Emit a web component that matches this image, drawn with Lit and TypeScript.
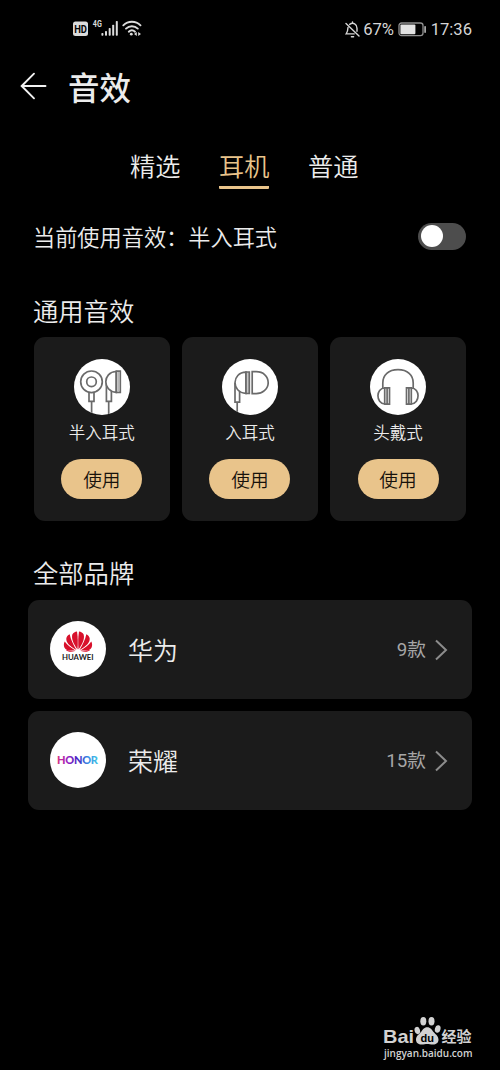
import { LitElement, html, svg, css } from "lit";
import { customElement, property, state } from "lit/decorators.js";

const fonts = css`"Noto Sans CJK SC", "Noto Sans", sans-serif`;

@customElement("status-bar")
class StatusBar extends LitElement {
  static styles = css`
    :host { display: flex; height: 58px; padding: 0 28px 0 73px; align-items: center; justify-content: space-between; box-sizing: border-box; color: #d6d6d6; font: 16.6px/22px Roboto, sans-serif; }
    svg { display: block; }
    .right { display: flex; align-items: center; height: 22px; padding-top: 1px; }
    .net { font: 700 9px Roboto, sans-serif; }
    .hd { font: 700 10.5px Roboto, sans-serif; }
    .battery { margin: 0 4px 0 4px; }
    .bell { margin: 0 3px 0 0; }
    .pct { letter-spacing: -0.15px; }
  `;
  render() {
    return html`
      <svg width="70" height="20" viewBox="0 0 70 20" fill="#dcdcdc">
        <rect x="0" y="2.500" width="15" height="14.500" rx="2.500" />
        <text class="hd" x="1.2" y="13.600" fill="#050505" textLength="12.8" lengthAdjust="spacingAndGlyphs">HD</text>
        <text class="net" x="19.8" y="8.4" textLength="9" lengthAdjust="spacingAndGlyphs">4G</text>
        <rect x="28.4" y="14" width="2" height="2.8" rx=".7" />
        <rect x="32" y="12" width="2" height="4.8" rx=".7" />
        <rect x="35.7" y="9" width="2" height="7.8" rx=".7" />
        <rect x="39.2" y="5.7" width="2" height="11.1" rx=".7" />
        <rect x="42.8" y="2" width="2" height="14.8" rx=".7" />
        <g fill="none" stroke="#dcdcdc" stroke-width="1.9" stroke-linecap="round">
          <path d="M50.3 6.3c4.8-4.8 12.4-4.8 17.2 0M53 9.6c3.3-3.2 8.5-3.2 11.8 0M55.8 12.700c1.8-1.7 4.4-1.700 6.2 0" />
        </g>
        <circle cx="58.3" cy="15.2" r="1.4" />
        <path d="m61 15.1 2.8-2v4zM68 15.1l-2.8-2v4z" />
      </svg>
      <div class="right">
        <svg class="bell" width="15" height="18" viewBox="0 0 15 18" fill="none" stroke="#d6d6d6" stroke-width="1.4" stroke-linecap="round">
          <path d="M1 2.6 14 15M4.7 3.4C8.2.8 12 3.3 12 7.2v3M3 6.5c-.2 4.2-.4 4.5-1.8 6.4h8M6.4 15.7h2.2M7.5 1v1" />
        </svg>
        <span class="pct">67%</span>
        <svg class="battery" width="29" height="15" viewBox="0 0 29 15">
          <rect x="1" y="1" width="24" height="12.6" rx="2.6" fill="none" stroke="#8f8f8f" stroke-width="1.3" />
          <rect x="2.4" y="2.4" width="15" height="9.8" rx="1" fill="#e2e2e2" />
          <rect x="26.3" y="4" width="1.6" height="7" rx=".8" fill="#b8b8b8" />
        </svg>
        <span>17:36</span>
      </div>
    `;
  }
}

const stroke = "#6a6a6a";

const glyphs: Record<string, unknown> = {
  semi: svg`
    <g fill="none" stroke=${stroke} stroke-width="1.7">
      <circle cx="17.5" cy="22.8" r="10.800" /><circle cx="17.5" cy="22.8" r="4.800" />
      <path d="M15 33.7v8.6h5v-8.6M17.6 42.3V56" />
      <path d="M32.4 24v18.3h5V30M34.7 42.3V56" />
      <path d="M42.3 12.500c-14 .5-14 20 0 20.8z" fill="#fff" />
      <path d="M42.3 12.200h4v21.200h-4z" />
      <path d="M44.3 13v19.500" stroke="#b8b8b8" />
    </g>`,
  inear: svg`
    <g fill="none" stroke=${stroke} stroke-width="1.7">
      <path d="M13 24v19.2h4.6V31.500M15.2 43.2V53" />
      <path d="M24 13.2c-14.400.2-14.900 20.300 0 21.2z" fill="#fff" />
      <path d="M24 13h3.3v21.500H24z" fill="#c8c8c8" />
      <path d="M30.2 12.7v22h4c5.9 0 12-4.5 12-11s-5-11-12-11z" />
    </g>`,
  over: svg`
    <g fill="none" stroke=${stroke} stroke-width="1.7">
      <path d="M12.8 29.5V24C12.800 16 18.500 10.700 28 10.700S43.200 16 43.200 24v5.5" />
      <path d="M14.7 29c-9 .2-9 15.4 0 16M14.7 28.8h4.8v16.4h-4.8zM17.1 29v16" />
      <path d="M41.3 29c9 .2 9 15.4 0 16M41.3 28.8h-4.8v16.4h4.8zM38.9 29v16" />
    </g>`,
};

@customElement("effect-card")
class EffectCard extends LitElement {
  @property() kind = "semi";
  @property() label = "";
  static styles = css`
    :host { display: flex; flex-direction: column; align-items: center; height: 183.5px; box-sizing: border-box; padding-top: 22px; border-radius: 11px; background: #1b1b1b; font-family: ${fonts}; font-weight: 350; }
    .icon { display: block; width: 56px; height: 56px; border-radius: 50%; background: #fff; overflow: hidden; }
    .label { margin-top: 6px; color: #ececec; font-size: 16.5px; line-height: 22px; }
    button { margin: 16px 0 0; width: 81px; height: 39.5px; padding: 0; border: 0; border-radius: 20px; background: #e9c48b; color: #17120b; font: 350 18.7px/38px ${fonts}; }
  `;
  render() {
    return html`
      <svg class="icon" viewBox="0 0 56 56">${glyphs[this.kind]}</svg>
      <div class="label">${this.label}</div>
      <button>使用</button>
    `;
  }
}

const logos: Record<string, unknown> = {
  huawei: svg`
    <g fill="#d8112c">
      <path d="M27.500 28.6C23 22.500 21.200 17 22.400 13.600c.8-1.900 2.600-2.700 4.600-3 .9 5.400 1 11.400.5 18z" />
      <path d="M28.500 28.6C33 22.500 34.800 17 33.600 13.600c-.8-1.900-2.600-2.700-4.600-3-.9 5.400-1 11.400-.5 18z" />
      <path d="M26.500 29c-7.400-4-10.400-7.400-10.200-11.400.2-2 1.500-3.700 3.400-4.400 1 5.300 3.500 10.400 6.800 15.800z" />
      <path d="M29.500 29c7.400-4 10.400-7.400 10.200-11.400-.2-2-1.500-3.700-3.400-4.400-1 5.300-3.500 10.400-6.800 15.800z" />
      <path d="M25.600 29.400c-6.300.7-9.900-.4-11.200-3-.8-1.900-.7-4.100.3-5.900 3 4 6.400 6.400 10.900 8.900z" />
      <path d="M30.400 29.400c6.300.7 9.900-.4 11.200-3 .8-1.900.7-4.100-.3-5.900-3 4-6.400 6.400-10.900 8.900z" />
      <path d="M25 30c-3.600 1.300-7.300 1.100-9.200-1.200 3 .9 6.100 1.200 9.200 1.200zM31 30c3.600 1.300 7.300 1.100 9.200-1.200-3 .9-6.100 1.200-9.200 1.200z" />
    </g>
    <text class="hw" x="12" y="39.2" textLength="31.6" lengthAdjust="spacingAndGlyphs">HUAWEI</text>`,
  honor: svg`
    <defs><linearGradient id="h" x1="0" x2="1">
      <stop offset="0" stop-color="#d9337f" /><stop offset=".22" stop-color="#a322c0" />
      <stop offset=".5" stop-color="#4224c4" /><stop offset=".75" stop-color="#3a8fe6" /><stop offset="1" stop-color="#45cbe6" />
    </linearGradient></defs>
    <text class="hn" x="7" y="32.2" fill="url(#h)" textLength="41" lengthAdjust="spacing">HONOR</text>`,
};

@customElement("brand-row")
class BrandRow extends LitElement {
  @property() brand = "";
  @property() name = "";
  @property() count = "";
  static styles = css`
    :host { display: flex; align-items: center; height: 99.5px; box-sizing: border-box; padding: 0 24px 0 22px; border-radius: 11px; background: #1b1b1b; font-family: ${fonts}; font-weight: 350; }
    .logo { width: 56px; height: 56px; border-radius: 50%; background: #fff; }
    .hw { font: 700 8px Lato, sans-serif; fill: #222; }
    .hn { font: 900 11px Lato, sans-serif; }
    .name { flex: 1; margin-left: 22px; color: #ececec; font-size: 25px; line-height: 36px; }
    .count { color: #a6a6a6; font: 18.7px/28px Roboto, "Noto Sans CJK SC", sans-serif; margin-right: 8px; padding-top: 2px; }
    .chev { padding-top: 1px; }
  `;
  render() {
    return html`
      <svg class="logo" viewBox="0 0 56 56">${logos[this.brand]}</svg>
      <div class="name">${this.name}</div>
      <div class="count">${this.count}</div>
      <svg class="chev" width="14" height="22" viewBox="0 0 14 22" fill="none" stroke="#8c8c8c" stroke-width="2"><path d="m2 1.5 10 9.5-10 9.5" /></svg>
    `;
  }
}

@customElement("app-root")
class AppRoot extends LitElement {
  @state() tab = 1;
  static styles = css`
    :host { display: flex; flex-direction: column; position: relative; width: 500px; height: 1070px; overflow: hidden; background: #000; color: #ececec; font-family: ${fonts}; font-weight: 350; }
    .title { display: flex; align-items: center; height: 58px; padding-left: 20px; box-sizing: border-box; }
    .title h1 { margin: 0 0 3px 20px; font-size: 31.5px; line-height: 44px; font-weight: 500; }
    .tabs { display: flex; gap: 38.6px; padding: 28px 0 0 130px; height: 73.5px; box-sizing: border-box; }
    .tab { font-size: 25.2px; line-height: 42px; height: 42px; border-bottom: 3px solid transparent; border-radius: 1px; }
    .tab.on { color: #e9c48b; border-color: #e9c48b; }
    .current { display: flex; align-items: center; justify-content: space-between; height: 93px; margin-bottom: 9px; padding: 0 34px 0 33px; font-size: 22.2px; }
    .switch { width: 48px; height: 27px; border-radius: 14px; background: #4d4d4d; padding: 2.5px; box-sizing: border-box; }
    .knob { width: 22px; height: 22px; border-radius: 50%; background: #fff; }
    h2 { margin: 0 0 0 33px; font-size: 25.3px; line-height: 36px; font-weight: 350; }
    .grid { display: grid; grid-template-columns: repeat(3, 136.7px); gap: 11.4px; margin: 9.5px 0 33px 33.5px; }
    .brands { display: flex; flex-direction: column; gap: 11.5px; margin: 10px 28px 0; }
    .mark { position: absolute; right: 22px; bottom: 5px; width: 96px; height: 50px; color: #d2d2d2; }
    .bai { font: 700 18.6px "Liberation Sans", sans-serif; }
    .du { font: 700 11px "Liberation Sans", sans-serif; }
    .jy { font: 700 14.5px "Noto Sans CJK SC", sans-serif; }
    .url { font: 600 11.5px "Open Sans", sans-serif; }
  `;
  render() {
    const tabs = ["精选", "耳机", "普通"];
    return html`
      <status-bar></status-bar>
      <div class="title">
        <svg width="28" height="30" viewBox="0 0 28 30" fill="none" stroke="#f2f2f2" stroke-width="1.9" stroke-linecap="round" stroke-linejoin="round"><path d="M25.5 14H1.5M14 1.7 1.7 14 14 26.3" /></svg>
        <h1>音效</h1>
      </div>
      <div class="tabs">
        ${tabs.map((t, i) => html`<div class="tab ${i === this.tab ? "on" : ""}" @click=${() => (this.tab = i)}>${t}</div>`)}
      </div>
      <div class="current">
        <span>当前使用音效：半入耳式</span>
        <div class="switch"><div class="knob"></div></div>
      </div>
      <h2>通用音效</h2>
      <div class="grid">
        <effect-card kind="semi" label="半入耳式"></effect-card>
        <effect-card kind="inear" label="入耳式"></effect-card>
        <effect-card kind="over" label="头戴式"></effect-card>
      </div>
      <h2>全部品牌</h2>
      <div class="brands">
        <brand-row brand="huawei" name="华为" count="9款"></brand-row>
        <brand-row brand="honor" name="荣耀" count="15款"></brand-row>
      </div>
      <svg class="mark" viewBox="0 0 96 50" fill="currentColor">
        <text class="bai" x="1" y="28.2" textLength="31" lengthAdjust="spacingAndGlyphs">Bai</text>
        <ellipse cx="35.3" cy="15.5" rx="2.7" ry="3.7" transform="rotate(-15 35.3 15.5)" />
        <ellipse cx="41.3" cy="6.3" rx="3" ry="4.2" />
        <ellipse cx="49.5" cy="6.3" rx="3" ry="4.2" />
        <ellipse cx="55.7" cy="14" rx="2.8" ry="3.8" transform="rotate(15 55.7 14)" />
        <path d="M45.2 12.3C48.500 12.300 49.800 15 51.500 17C53.500 19.300 56.500 21 56.500 24.800C56.500 28 54 29.500 51 29.500C48.500 29.500 47 28.900 45.200 28.900S42 29.500 39.500 29.500C36.500 29.500 34 28 34 24.800C34 21 37 19.300 39 17C40.700 15 42 12.300 45.200 12.300z" />
        <text class="du" x="38.5" y="27" fill="#000" textLength="13.5" lengthAdjust="spacingAndGlyphs">du</text>
        <text class="jy" x="59.5" y="27.4" textLength="30" lengthAdjust="spacingAndGlyphs">经验</text>
        <text class="url" x="2" y="41.5" textLength="88.5" lengthAdjust="spacingAndGlyphs">jingyan.baidu.com</text>
      </svg>
    `;
  }
}
